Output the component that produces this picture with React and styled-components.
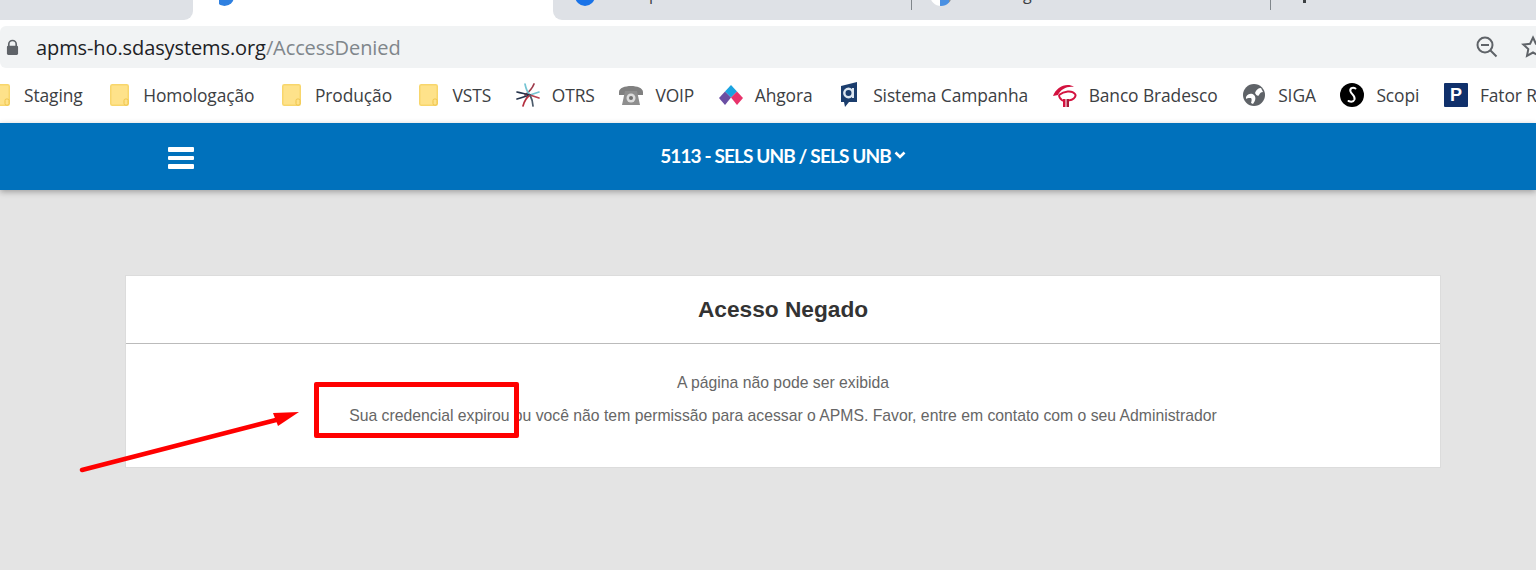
import React from "react";
import styled, { createGlobalStyle } from "styled-components";

const GlobalStyle = createGlobalStyle`
  html, body {
    margin: 0;
    padding: 0;
    height: 570px;
    overflow: hidden;
    background: #e4e4e4;
  }
`;

const bookmarks = [
  { label: "Staging", icon: "folder" },
  { label: "Homologação", icon: "folder" },
  { label: "Produção", icon: "folder" },
  { label: "VSTS", icon: "folder" },
  { label: "OTRS", icon: "otrs" },
  { label: "VOIP", icon: "phone" },
  { label: "Ahgora", icon: "ahgora" },
  { label: "Sistema Campanha", icon: "campanha" },
  { label: "Banco Bradesco", icon: "bradesco" },
  { label: "SIGA", icon: "globe" },
  { label: "Scopi", icon: "scopi" },
  { label: "Fator RH", icon: "fator" },
];

const BookmarkIcon = ({ name }) => {
  if (name === "folder") {
    return (
      <svg width="19" height="22" viewBox="0 0 19 22">
        <rect x="0.75" y="0.75" width="17.5" height="20.5" rx="1.5" fill="#fee28a" stroke="#f8d66c" strokeWidth="1.5" />
        <rect x="14" y="15" width="4" height="6" rx="1.5" fill="#fee28a" stroke="#eec44a" />
      </svg>
    );
  }
  if (name === "otrs") {
    return (
      <svg width="24" height="24" viewBox="0 0 24 24" fill="none" strokeWidth="1.7" strokeLinecap="round">
        <path d="M18 1C16 6 13 9 9 12" stroke="#9e3b4b" />
        <path d="M9 1c1 5 3 9 5 11" stroke="#74c4d3" />
        <path d="M23 9c-3 1-6 2-9 3" stroke="#74c4d3" />
        <path d="M14 12c3 1 6 2 9 3" stroke="#b8404f" />
        <path d="M1 9c4 1 9 2 13 3" stroke="#25324a" />
        <path d="M1 16c4-1 9-3 13-4" stroke="#25324a" />
        <path d="M7 23c1-4 3-8 7-11" stroke="#b5303f" />
        <path d="M14 12c2 4 3 7 3 11" stroke="#4b5a6a" />
      </svg>
    );
  }
  if (name === "phone") {
    return (
      <svg width="24" height="21" viewBox="0 0 24 21">
        <path d="M0 8C0 0 24 0 24 8v3h-7V7H7v4H0z" fill="#808080" />
        <path d="M6 7h12l3 14H3z" fill="#8e8e8e" />
        <circle cx="12" cy="14" r="4.500" fill="#dcdcdc" />
        <circle cx="12" cy="14" r="2" fill="#707070" />
      </svg>
    );
  }
  if (name === "ahgora") {
    return (
      <svg width="24" height="20" viewBox="0 0 24 20">
        <path d="M12 0l6 6.500-6 6-6-6z" fill="#1ba3e0" />
        <path d="M6 6.500l6 6-6 7.500-6-7z" fill="#6a4ea3" />
        <path d="M18 6.500l6 6.500-6 7-6-7.500z" fill="#e8336b" />
      </svg>
    );
  }
  if (name === "campanha") {
    return (
      <svg width="18" height="25" viewBox="0 0 18 25">
        <path d="M1 4l16-4v20H9l-4 5-1-5H1z" fill="#1b3d6d" />
        <circle cx="8.500" cy="11" r="4.200" fill="none" stroke="#dce6f0" strokeWidth="2.400" />
        <path d="M13 6v10" stroke="#dce6f0" strokeWidth="2" />
      </svg>
    );
  }
  if (name === "bradesco") {
    return (
      <svg width="24" height="24" viewBox="0 0 24 24">
        <path d="M0 13C3 4 14-1 21 4 14 3 8 6 5 12z" fill="#d3123f" />
        <path d="M6 12c5-4 13-5 16-1 2 3-3 7-7 6" fill="none" stroke="#d3123f" strokeWidth="2" />
        <path d="M6 12c0 4 3 5 4 6" fill="none" stroke="#d3123f" strokeWidth="1.800" />
        <path d="M10 16h2.500v8H10z" fill="#d3123f" />
        <path d="M13.500 16H16v8h-2.500z" fill="#a81a3a" />
      </svg>
    );
  }
  if (name === "globe") {
    return (
      <svg width="22" height="22" viewBox="0 0 22 22">
        <circle cx="11" cy="11" r="11" fill="#5f6368" />
        <path d="M3 13c2-4 6-4 8-2s2 5-1 9l-2-1c1-3 1-5-1-5s-3 0-4 1z" fill="#fff" />
        <path d="M12 9c1-3 3-5 6-5l2 4c-2 0-3 1-4 3s-3 0-4-2z" fill="#fff" />
      </svg>
    );
  }
  if (name === "scopi") {
    return (
      <svg width="24" height="24" viewBox="0 0 24 24">
        <circle cx="12" cy="12" r="12" fill="#000" />
        <path d="M15.500 5.500c-3-2-6 0-5 3s5 4 4 8c-1 2.500-3.500 2.500-6 1.500" fill="none" stroke="#fff" strokeWidth="2" strokeLinecap="round" />
      </svg>
    );
  }
  return <FatorBadge>P</FatorBadge>;
};

const Page = () => (
  <>
    <GlobalStyle />
    <Browser>
      <TabStrip>
        <LeftTab />
        <ActiveTab>
          <TabGlobe $left={22} $size={19} $colors="#fff 0 20%, #2f80e0 20% 100%" />
        </ActiveTab>
        <SideTab $width={359} $first $divider>
          <TabGlobe $left={22} $size={20} $colors="#1a73e8 0 100%" />
          <TabHint $left={96}>p</TabHint>
        </SideTab>
        <SideTab $width={359} $divider>
          <TabGlobe $left={18} $size={22} $colors="#fff 0 45%, #4a90e2 45% 85%, #8a8f94 85% 100%" />
          <TabHint $left={111}>g</TabHint>
        </SideTab>
        <SideTab $width={265}>
          <TabDot />
        </SideTab>
      </TabStrip>
      <AddressRow>
        <AddressBar>
          <LockIcon viewBox="0 0 14 18">
            <path d="M3 8V5.500a4 4 0 018 0V8" fill="none" stroke="#5f6368" strokeWidth="1.800" />
            <rect x="1" y="7" width="12" height="10" rx="1.500" fill="#5f6368" />
          </LockIcon>
          <Url>
            apms-ho.sdasystems.org<UrlPath>/AccessDenied</UrlPath>
          </Url>
          <AddressActions>
            <svg width="24" height="24" viewBox="0 0 24 24" fill="none" stroke="#5f6368" strokeWidth="2">
              <circle cx="10" cy="10" r="7.500" />
              <path d="M6 10h8M15.500 15.500l6 6" />
            </svg>
            <svg width="24" height="24" viewBox="0 0 24 24" fill="none" stroke="#5f6368" strokeWidth="2">
              <path d="M12 2.500l2.900 6.200 6.800.8-5 4.600 1.300 6.700-6-3.300-6 3.300 1.300-6.700-5-4.600 6.800-.8z" />
            </svg>
          </AddressActions>
        </AddressBar>
      </AddressRow>
      <BookmarkBar>
        {bookmarks.map((b) => (
          <Bookmark key={b.label}>
            <BookmarkIconBox>
              <BookmarkIcon name={b.icon} />
            </BookmarkIconBox>
            {b.label}
          </Bookmark>
        ))}
      </BookmarkBar>
    </Browser>
    <AppHeader>
      <MenuButton aria-label="menu">
        <MenuLine />
        <MenuLine />
        <MenuLine />
      </MenuButton>
      <UnitSelect>
        5113 - SELS UNB / SELS UNB
        <svg width="12" height="9" viewBox="0 0 12 9">
          <path d="M1.500 1.500L6 6l4.500-4.500" fill="none" stroke="#fff" strokeWidth="2.600" />
        </svg>
      </UnitSelect>
    </AppHeader>
    <Content>
      <Card>
        <CardTitle>Acesso Negado</CardTitle>
        <CardBody>
          <Message>A página não pode ser exibida</Message>
          <Message>
            Sua credencial expirou ou você não tem permissão para acessar o APMS. Favor, entre em contato com o seu
            Administrador
          </Message>
        </CardBody>
      </Card>
      <Highlight />
      <Arrow viewBox="0 0 230 70">
        <path d="M3 61L197 11" stroke="#ff0000" strokeWidth="4.500" strokeLinecap="round" />
        <path d="M220 3L194 4l5 13z" fill="#ff0000" />
      </Arrow>
    </Content>
  </>
);

const Browser = styled.div`
  background: #fff;
  height: 123px;
  overflow: hidden;
`;

const TabStrip = styled.div`
  display: flex;
  height: 20px;
  background: #fff;
`;

const LeftTab = styled.div`
  width: 193px;
  flex: none;
  background: #dee1e6;
  border-bottom-right-radius: 9px;
`;

const ActiveTab = styled.div`
  position: relative;
  width: 360px;
  flex: none;
`;

const SideTab = styled.div`
  position: relative;
  box-sizing: border-box;
  width: ${(p) => p.$width}px;
  flex: none;
  background: #dee1e6;
  border-bottom-left-radius: ${(p) => (p.$first ? "9px" : "0")};

  &::after {
    content: "";
    display: ${(p) => (p.$divider ? "block" : "none")};
    position: absolute;
    right: 0;
    top: 0;
    width: 1px;
    height: 10px;
    background: #80868b;
  }
`;

const TabGlobe = styled.span`
  position: absolute;
  left: ${(p) => p.$left}px;
  bottom: 14px;
  width: ${(p) => p.$size}px;
  height: ${(p) => p.$size}px;
  border-radius: 50%;
  background: linear-gradient(90deg, ${(p) => p.$colors});
`;

const TabHint = styled.span`
  position: absolute;
  left: ${(p) => p.$left}px;
  top: -17px;
  font: 16px "Open Sans", sans-serif;
  color: #3c4043;
`;

const TabDot = styled.span`
  position: absolute;
  left: 32px;
  top: 0;
  width: 3px;
  height: 3px;
  background: #3c4043;
`;

const AddressRow = styled.div`
  padding-top: 6px;
`;

const AddressBar = styled.div`
  display: flex;
  align-items: center;
  height: 42px;
  background: #f1f3f4;
  border-radius: 6px 0 0 6px;
  padding-left: 6px;
`;

const LockIcon = styled.svg`
  width: 13px;
  height: 17px;
  flex: none;
`;

const Url = styled.div`
  margin-left: 17px;
  font: 20px "Open Sans", sans-serif;
  letter-spacing: -0.1px;
  color: #202124;
`;

const UrlPath = styled.span`
  color: #80868b;
`;

const AddressActions = styled.div`
  display: flex;
  align-items: center;
  gap: 22px;
  margin-left: auto;
  margin-right: -9px;
`;

const BookmarkBar = styled.div`
  display: flex;
  align-items: center;
  gap: 24.6px;
  height: 53px;
  margin-left: -12px;
  white-space: nowrap;
`;

const Bookmark = styled.div`
  display: flex;
  align-items: center;
  flex: none;
  font: 17.4px "Open Sans", sans-serif;
  letter-spacing: -0.1px;
  color: #3c4043;
`;

const BookmarkIconBox = styled.span`
  display: flex;
  justify-content: center;
  width: 24px;
  margin-right: 12px;
`;

const FatorBadge = styled.span`
  display: block;
  width: 24px;
  height: 24px;
  border-radius: 1px;
  background: #10306b;
  color: #fff;
  font: 700 18px/24px "Liberation Sans", Arial, sans-serif;
  text-align: center;
`;

const AppHeader = styled.header`
  position: relative;
  display: flex;
  align-items: center;
  justify-content: center;
  height: 67px;
  background: #0071bc;
  box-shadow: 0 2px 6px rgba(0, 0, 0, 0.3);
`;

const MenuButton = styled.button`
  position: absolute;
  left: 168px;
  top: 24px;
  display: flex;
  flex-direction: column;
  gap: 4px;
  width: 26px;
  padding: 0;
  border: 0;
  background: none;
`;

const MenuLine = styled.span`
  height: 4.500px;
  border-radius: 1px;
  background: #fff;
`;

const UnitSelect = styled.div`
  display: flex;
  align-items: center;
  gap: 3px;
  margin-left: 30px;
  margin-top: -3px;
  font: 700 19px Lato, sans-serif;
  letter-spacing: -0.88px;
  color: #fff;
`;

const Content = styled.main`
  position: relative;
  padding: 85px 95px 0 125px;
`;

const Card = styled.section`
  background: #fff;
  border: 1px solid #dcdcdc;
  font-family: "Liberation Sans", Arial, sans-serif;
`;

const CardTitle = styled.h1`
  margin: 0;
  height: 67px;
  line-height: 67px;
  text-align: center;
  font-size: 22.7px;
  font-weight: 700;
  color: #333;
  border-bottom: 1px solid #bbb;
`;

const CardBody = styled.div`
  height: 123px;
  padding-top: 29px;
  box-sizing: border-box;
  text-align: center;
`;

const Message = styled.p`
  margin: 0 0 13px;
  font-size: 15.75px;
  line-height: 20px;
  color: #666;
`;

const Highlight = styled.div`
  position: absolute;
  left: 314px;
  top: 192px;
  width: 205px;
  height: 56px;
  box-sizing: border-box;
  border: 5px solid #ff0000;
  border-radius: 2px;
`;

const Arrow = styled.svg`
  position: absolute;
  left: 79px;
  top: 219px;
  width: 230px;
  height: 70px;
`;

export default Page;
